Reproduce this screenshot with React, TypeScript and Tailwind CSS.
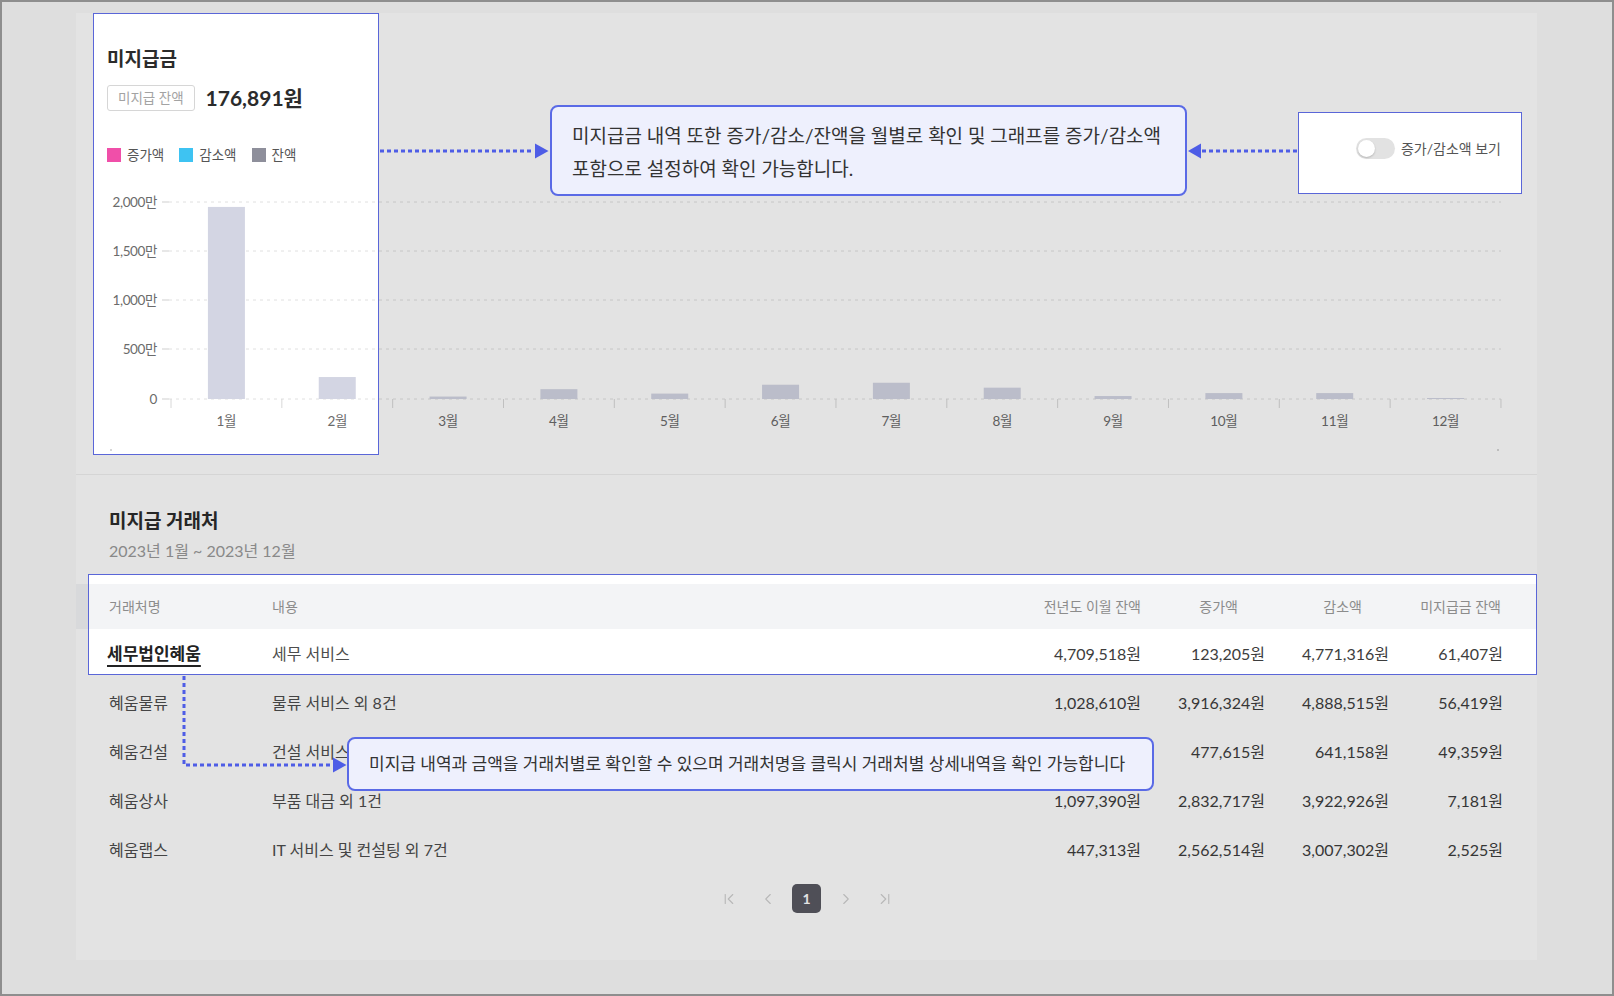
import { ChevronFirst, ChevronLast, ChevronLeft, ChevronRight } from "lucide-react";

const MONTHS = ["1월", "2월", "3월", "4월", "5월", "6월", "7월", "8월", "9월", "10월", "11월", "12월"];
// 잔액 (단위: 만원)
const BALANCE = [1950, 223, 25, 100, 55, 145, 165, 115, 30, 60, 60, 10];
const Y_TICKS = [
  { label: "2,000만", y: 22 },
  { label: "1,500만", y: 71 },
  { label: "1,000만", y: 120 },
  { label: "500만", y: 169 },
  { label: "0", y: 219 },
];

const ROWS = [
  { name: "세무법인혜움", desc: "세무 서비스", prev: "4,709,518원", inc: "123,205원", dec: "4,771,316원", bal: "61,407원" },
  { name: "혜움물류", desc: "물류 서비스 외 8건", prev: "1,028,610원", inc: "3,916,324원", dec: "4,888,515원", bal: "56,419원" },
  { name: "혜움건설", desc: "건설 서비스 외 2건", prev: "212,902원", inc: "477,615원", dec: "641,158원", bal: "49,359원" },
  { name: "혜움상사", desc: "부품 대금 외 1건", prev: "1,097,390원", inc: "2,832,717원", dec: "3,922,926원", bal: "7,181원" },
  { name: "혜움랩스", desc: "IT 서비스 및 컨설팅 외 7건", prev: "447,313원", inc: "2,562,514원", dec: "3,007,302원", bal: "2,525원" },
];

const AXIS_X0 = 95;
const STEP = 110.83;
const BASE_Y = 219;

function Chart() {
  return (
    <svg width="1461" height="294" viewBox="0 0 1461 294" className="block mt-[17px]">
      {Y_TICKS.map((t) => (
        <g key={t.label}>
          <text x="81" y={t.y + 4.5} textAnchor="end" fontSize="13.5" fill="#6b6b6b" letterSpacing="-0.4">
            {t.label}
          </text>
          <line x1="86" x2="93" y1={t.y} y2={t.y} stroke="#cfcfcf" strokeWidth="1" />
          <line x1="93" x2="1425" y1={t.y} y2={t.y} stroke="#e0e0e0" strokeWidth="1" strokeDasharray="3 4" />
        </g>
      ))}
      {Array.from({ length: 13 }).map((_, k) => (
        <line
          key={k}
          x1={AXIS_X0 + k * STEP}
          x2={AXIS_X0 + k * STEP}
          y1={BASE_Y}
          y2={BASE_Y + 9}
          stroke="#d8d8d8"
          strokeWidth="1"
        />
      ))}
      {BALANCE.map((v, k) => {
        const h = Math.max(1, v * 0.0985);
        const cx = AXIS_X0 + STEP / 2 + k * STEP;
        return <rect key={k} x={cx - 18.5} y={BASE_Y - h} width="37" height={h} fill="#d3d5e3" />;
      })}
      {MONTHS.map((m, k) => (
        <text
          key={m}
          x={AXIS_X0 + STEP / 2 + k * STEP}
          y="246"
          textAnchor="middle"
          fontSize="13.5"
          fill="#6b6b6b"
          letterSpacing="-0.3"
        >
          {m}
        </text>
      ))}
      <circle cx="35" cy="270" r="1" fill="#c8c8c8" />
      <circle cx="1422" cy="270" r="1" fill="#c8c8c8" />
    </svg>
  );
}

function Legend() {
  const items = [
    { label: "증가액", color: "bg-[#f04fa9]" },
    { label: "감소액", color: "bg-[#3ec3f2]" },
    { label: "잔액", color: "bg-[#8e8f9b]" },
  ];
  return (
    <div className="mt-[36px] flex items-center gap-[15px] h-[16px]">
      {items.map((i) => (
        <div key={i.label} className="flex items-center gap-[6px]">
          <span className={`w-[14px] h-[14px] ${i.color}`} />
          <span className="text-[13.5px] text-[#555]">{i.label}</span>
        </div>
      ))}
    </div>
  );
}

function Toggle() {
  return (
    <div className="mt-[87px] flex items-center gap-[6px]">
      <div className="w-[39px] h-[21px] rounded-full bg-[#e2e2e2] flex items-center px-[2px]">
        <span className="w-[17px] h-[17px] rounded-full bg-white shadow-[0_1px_2px_rgba(0,0,0,0.2)]" />
      </div>
      <span className="text-[14px] text-[#555]">증가/감소액 보기</span>
    </div>
  );
}

function Table() {
  const grid = "grid grid-cols-[163px_1fr_124px_124px_124px_114px] items-center pl-[33px] pr-[34px]";
  return (
    <div className="mt-[21px]">
      <div className={`${grid} h-[45px] bg-[#f3f4f6] text-[14px] text-[#8c8c8c]`}>
        <span>거래처명</span>
        <span>내용</span>
        <span className="text-right">전년도 이월 잔액</span>
        <span className="text-right pr-[27px]">증가액</span>
        <span className="text-right pr-[27px]">감소액</span>
        <span className="text-right pr-[2px]">미지급금 잔액</span>
      </div>
      {ROWS.map((r, i) => (
        <div key={r.name} className={`${grid} h-[49px] text-[16px] text-[#4d4d4d]`}>
          {i === 0 ? (
            <span className="-ml-[2px] text-[17px] font-bold text-[#222] underline decoration-2 underline-offset-[5px]">
              {r.name}
            </span>
          ) : (
            <span>{r.name}</span>
          )}
          <span>{r.desc}</span>
          <span className="text-right text-[#3d3d3d]">{r.prev}</span>
          <span className="text-right text-[#3d3d3d]">{r.inc}</span>
          <span className="text-right text-[#3d3d3d]">{r.dec}</span>
          <span className="text-right text-[#3d3d3d]">{r.bal}</span>
        </div>
      ))}
    </div>
  );
}

function Pagination() {
  return (
    <div className="mt-[10px] flex items-center justify-center gap-[10px] text-[#cfcfcf]">
      <span className="w-[29px] h-[29px] flex items-center justify-center">
        <ChevronFirst size={18} strokeWidth={1.5} />
      </span>
      <span className="w-[29px] h-[29px] flex items-center justify-center">
        <ChevronLeft size={18} strokeWidth={1.5} />
      </span>
      <span className="w-[29px] h-[29px] rounded-[5px] bg-[#595962] text-white text-[14px] font-bold flex items-center justify-center">
        1
      </span>
      <span className="w-[29px] h-[29px] flex items-center justify-center">
        <ChevronRight size={18} strokeWidth={1.5} />
      </span>
      <span className="w-[29px] h-[29px] flex items-center justify-center">
        <ChevronLast size={18} strokeWidth={1.5} />
      </span>
    </div>
  );
}

function Overlay() {
  return (
    <>
      {/* dim layer with spotlight holes */}
      <svg className="absolute inset-0 pointer-events-none" width="1614" height="996">
        <path
          fillRule="evenodd"
          fill="rgba(0,0,0,0.11)"
          d="M0 0H1614V996H0Z M93 13H379V455H93Z M1298 112H1522V194H1298Z M88 574H1537V675H88Z"
        />
      </svg>

      <div className="absolute left-[93px] top-[13px] w-[286px] h-[442px] border-[1.5px] border-[#5a66d8]" />
      <div className="absolute left-[1298px] top-[112px] w-[224px] h-[82px] border-[1.5px] border-[#5a66d8]" />
      <div className="absolute left-[88px] top-[574px] w-[1449px] h-[101px] border-[1.5px] border-[#5a66d8]" />

      <svg className="absolute inset-0 pointer-events-none" width="1614" height="996">
        <g stroke="#4e5de6" strokeWidth="3" strokeDasharray="4 3" fill="none">
          <line x1="380" x2="534" y1="151" y2="151" />
          <line x1="1297" x2="1202" y1="151" y2="151" />
          <path d="M184 676V765H333" />
        </g>
        <g fill="#4e5de6">
          <polygon points="535,143.5 548.5,151 535,158.5" />
          <polygon points="1201,143.5 1188,151 1201,158.5" />
          <polygon points="333,757.5 346.5,765 333,772.5" />
        </g>
      </svg>

      <div className="absolute left-[550px] top-[105px] w-[637px] h-[91px] rounded-[8px] border-2 border-[#5a6ae6] bg-[#eef0fd] pl-[20px] pt-[12px] text-[19px] leading-[33px] text-[#333]">
        <p>미지급금 내역 또한 증가/감소/잔액을 월별로 확인 및 그래프를 증가/감소액</p>
        <p>포함으로 설정하여 확인 가능합니다.</p>
      </div>

      <div className="absolute left-[347px] top-[737px] w-[807px] h-[54px] rounded-[8px] border-2 border-[#5a6ae6] bg-[#eef0fd] pl-[20px] flex items-center text-[17px] text-[#333]">
        미지급 내역과 금액을 거래처별로 확인할 수 있으며 거래처명을 클릭시 거래처별 상세내역을 확인 가능합니다
      </div>

      <div className="absolute inset-0 border-2 border-[#8e8e8e] pointer-events-none" />
    </>
  );
}

export default function App() {
  return (
    <div className="relative w-[1614px] h-[996px] overflow-hidden bg-[#fafafa] font-['Lato','Noto_Sans_CJK_KR',sans-serif]">
      <div className="ml-[76px] mt-[13px] w-[1461px] bg-white pb-[47px]">
        {/* chart section */}
        <section className="border-b border-[#f0f0f0]">
          <div className="flex justify-between pl-[31px] pr-[36px] pt-[33px]">
            <div>
              <h2 className="text-[19px] leading-[26px] font-bold text-[#2b2b2b]">미지급금</h2>
              <div className="mt-[13px] flex items-center">
                <span className="h-[26px] px-[10px] flex items-center rounded-[3px] border border-[#d6d6d6] text-[13.5px] text-[#a3a3a3]">
                  미지급 잔액
                </span>
                <span className="ml-[11px] text-[21px] leading-[26px] font-bold text-[#2b2b2b]">176,891원</span>
              </div>
              <Legend />
            </div>
            <Toggle />
          </div>
          <Chart />
        </section>

        {/* table section */}
        <section className="pt-[33px]">
          <div className="pl-[33px]">
            <h2 className="text-[19px] leading-[26px] font-bold text-[#2b2b2b]">미지급 거래처</h2>
            <p className="mt-[5px] text-[16px] leading-[24px] text-[#9a9a9a]">2023년 1월 ~ 2023년 12월</p>
          </div>
          <Table />
          <Pagination />
        </section>
      </div>
      <Overlay />
    </div>
  );
}
